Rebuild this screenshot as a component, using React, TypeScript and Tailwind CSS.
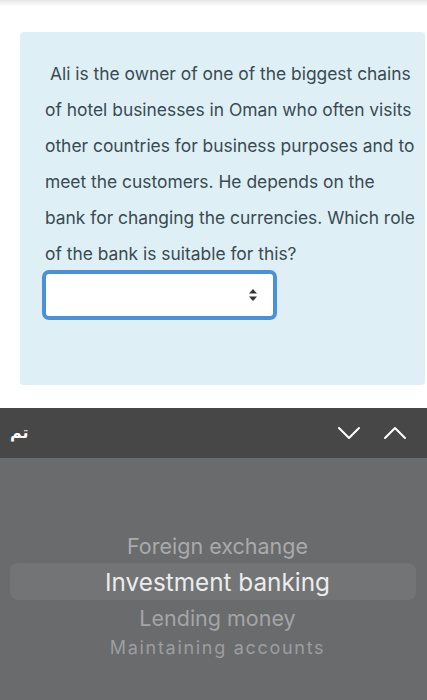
export default function App() {
  return (
    <div className="relative h-[700px] w-[427px] overflow-hidden bg-white font-['Inter',sans-serif]">
      {/* faint top shadow from the browser chrome */}
      <div className="h-[6px] bg-gradient-to-b from-[#e6e6e6] to-white" />

      <div className="mt-[26px] ml-[20px] mr-[2px] h-[353px] rounded-[4px] bg-[#def0f6] pl-[25px] pr-[9px] pt-[24px]">
        <p className="text-[17.4px] leading-[36px] text-[#3a4a52] indent-[5px]">
          Ali is the owner of one of the biggest chains of hotel businesses in Oman who often visits other countries for business purposes and to meet the customers. He depends on the bank for changing the currencies. Which role of the bank is suitable for this?
        </p>
        <div className="-mt-[2px] ml-[-3px] flex h-[50px] w-[235px] items-center justify-end rounded-[7px] border-[4px] border-[#4b91da] bg-white pr-[15px]">
          <svg width="10" height="14" viewBox="0 0 10 14" className="text-[#333]">
            <path d="M5 1 L9 5.5 H1 Z" fill="currentColor" />
            <path d="M5 13 L9 8.5 H1 Z" fill="currentColor" />
          </svg>
        </div>
      </div>

      <div className="mt-[23px] flex h-[50px] items-center justify-between bg-[#474747] px-[10px]">
        <span className="font-['DejaVu_Sans',sans-serif] text-[16px] font-bold text-white">تم</span>
        <div className="flex items-center gap-[22px] pr-[10px]">
          <svg width="24" height="14" viewBox="0 0 24 14" fill="none" stroke="white" strokeWidth="2" strokeLinecap="round" strokeLinejoin="round">
            <path d="M2 2 L12 12 L22 2" />
          </svg>
          <svg width="24" height="14" viewBox="0 0 24 14" fill="none" stroke="white" strokeWidth="2" strokeLinecap="round" strokeLinejoin="round">
            <path d="M2 12 L12 2 L22 12" />
          </svg>
        </div>
      </div>

      <div className="relative h-[242px] bg-[#6a6b6d] pt-[74px]">
        <div className="absolute left-[10px] right-[11px] top-[105px] h-[37px] rounded-[8px] bg-[#737476]" />
        <div className="relative flex flex-col items-center pl-[8px]">
          <div className="h-[28px] text-[21.5px] leading-[28px] text-[#a9aaac]">Foreign exchange</div>
          <div className="mt-[4px] h-[36px] text-[24.3px] leading-[36px] text-[#ececec]">Investment banking</div>
          <div className="h-[36px] text-[21.5px] leading-[36px] text-[#a4a5a7]">Lending money</div>
          <div className="h-[24px] text-[18px] leading-[24px] tracking-[1.7px] text-[#9d9ea0]">Maintaining accounts</div>
        </div>
      </div>
    </div>
  );
}
